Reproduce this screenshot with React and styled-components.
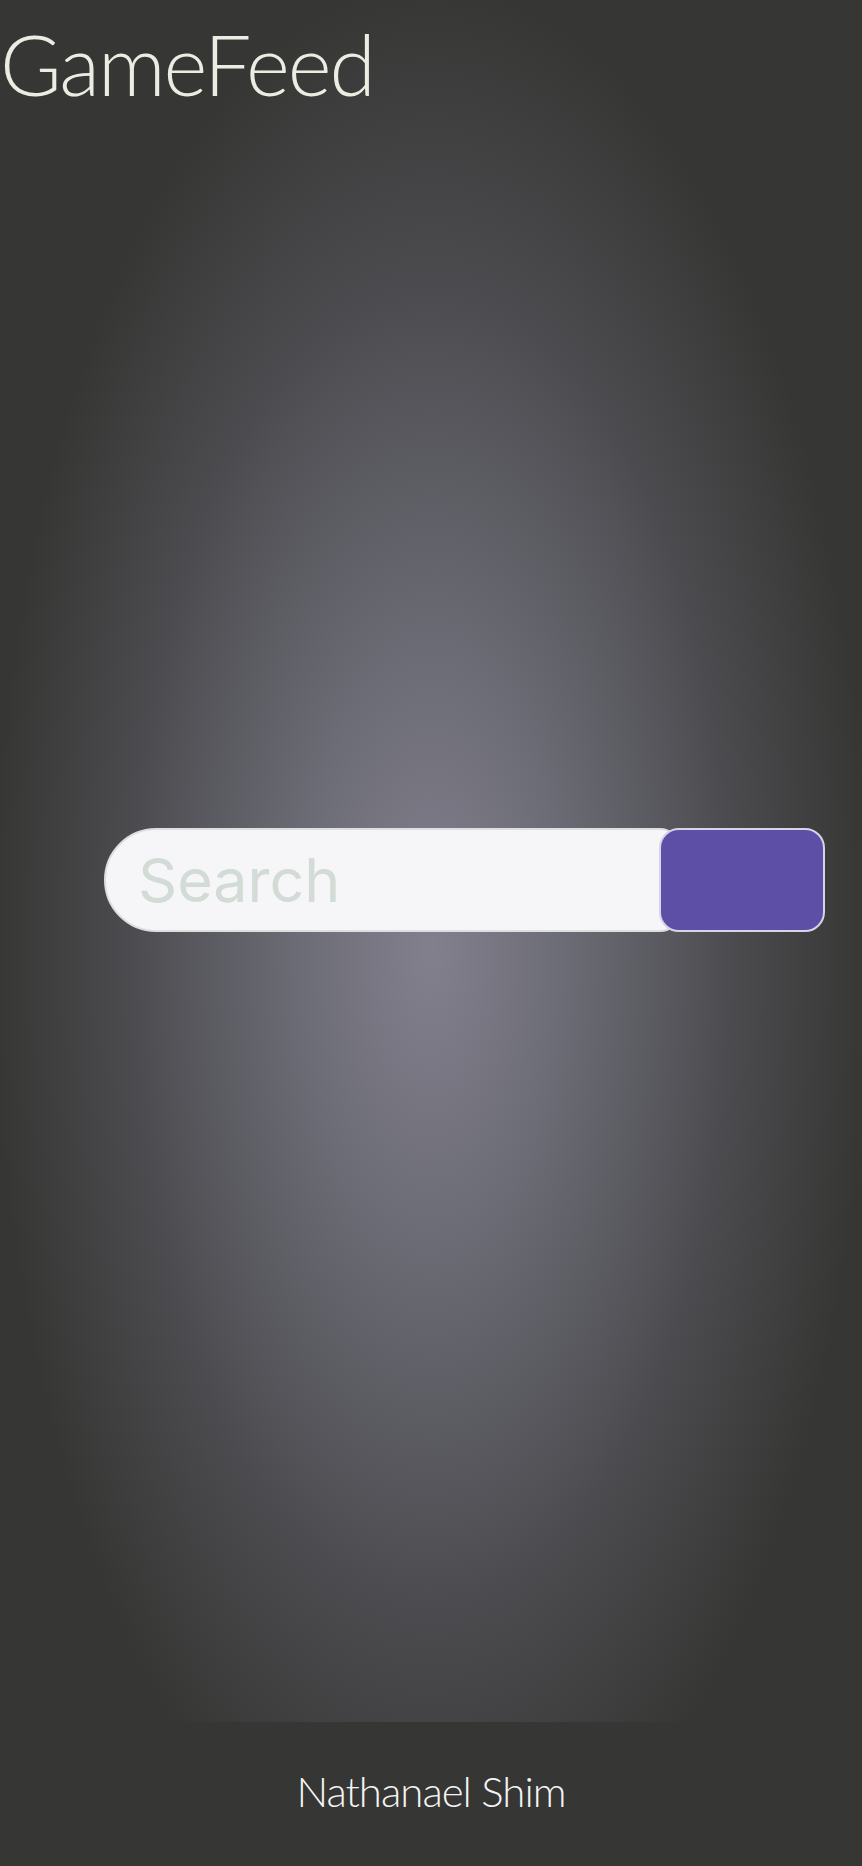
import React from "react";
import styled, { createGlobalStyle } from "styled-components";

const GlobalStyle = createGlobalStyle`
  html, body {
    margin: 0;
    padding: 0;
    background-color: #363634;
  }
  * {
    box-sizing: border-box;
  }
`;

const Page = styled.div`
  width: 100%;
  min-height: 1866px;
  display: flex;
  flex-direction: column;
  background-color: #363634;
`;

const Main = styled.main`
  height: 1722px;
  display: flex;
  flex-direction: column;
  background: radial-gradient(
    ellipse 51% 56% at 50% 55%,
    #82808d 0%,
    #6c6c76 30%,
    #4c4c50 68%,
    #363634 100%
  );
`;

const Title = styled.h1`
  margin: 0;
  padding: 22px 0 0 0;
  font-family: "Lato", "Liberation Sans", sans-serif;
  font-weight: 300;
  font-size: 84px;
  letter-spacing: -2px;
  line-height: 1;
  color: #ecece2;
`;

const Center = styled.div`
  flex: 1;
  display: flex;
  align-items: center;
  padding: 0 0 68px 104px;
`;

const SearchForm = styled.form`
  display: flex;
  align-items: stretch;
  height: 104px;
`;

const SearchInput = styled.input`
  width: 576px;
  height: 104px;
  border: 2px solid #dedee0;
  border-radius: 52px 20px 20px 52px;
  background-color: #f6f6f8;
  padding: 0 0 0 32px;
  font-family: "Inter", "Roboto", sans-serif;
  font-weight: 400;
  font-size: 61px;
  color: #333;
  outline: none;

  &::placeholder {
    color: #d2dbd5;
  }
`;

const SearchButton = styled.button`
  width: 166px;
  height: 104px;
  margin-left: -21px;
  border: 2px solid #d8d4e8;
  border-radius: 20px;
  background-color: #5e4fa6;
  cursor: pointer;
`;

const Footer = styled.footer`
  flex: 1;
  display: flex;
  justify-content: center;
  padding-top: 44px;
  font-family: "Lato", "Liberation Sans", sans-serif;
  font-weight: 300;
  font-size: 42px;
  letter-spacing: -1px;
  color: #f4f4f4;
`;

const App = () => {
  return (
    <Page>
      <GlobalStyle />
      <Main>
        <Title>GameFeed</Title>
        <Center>
          <SearchForm onSubmit={(e) => e.preventDefault()}>
            <SearchInput placeholder="Search" />
            <SearchButton type="submit" />
          </SearchForm>
        </Center>
      </Main>
      <Footer>Nathanael Shim</Footer>
    </Page>
  );
};

export default App;
